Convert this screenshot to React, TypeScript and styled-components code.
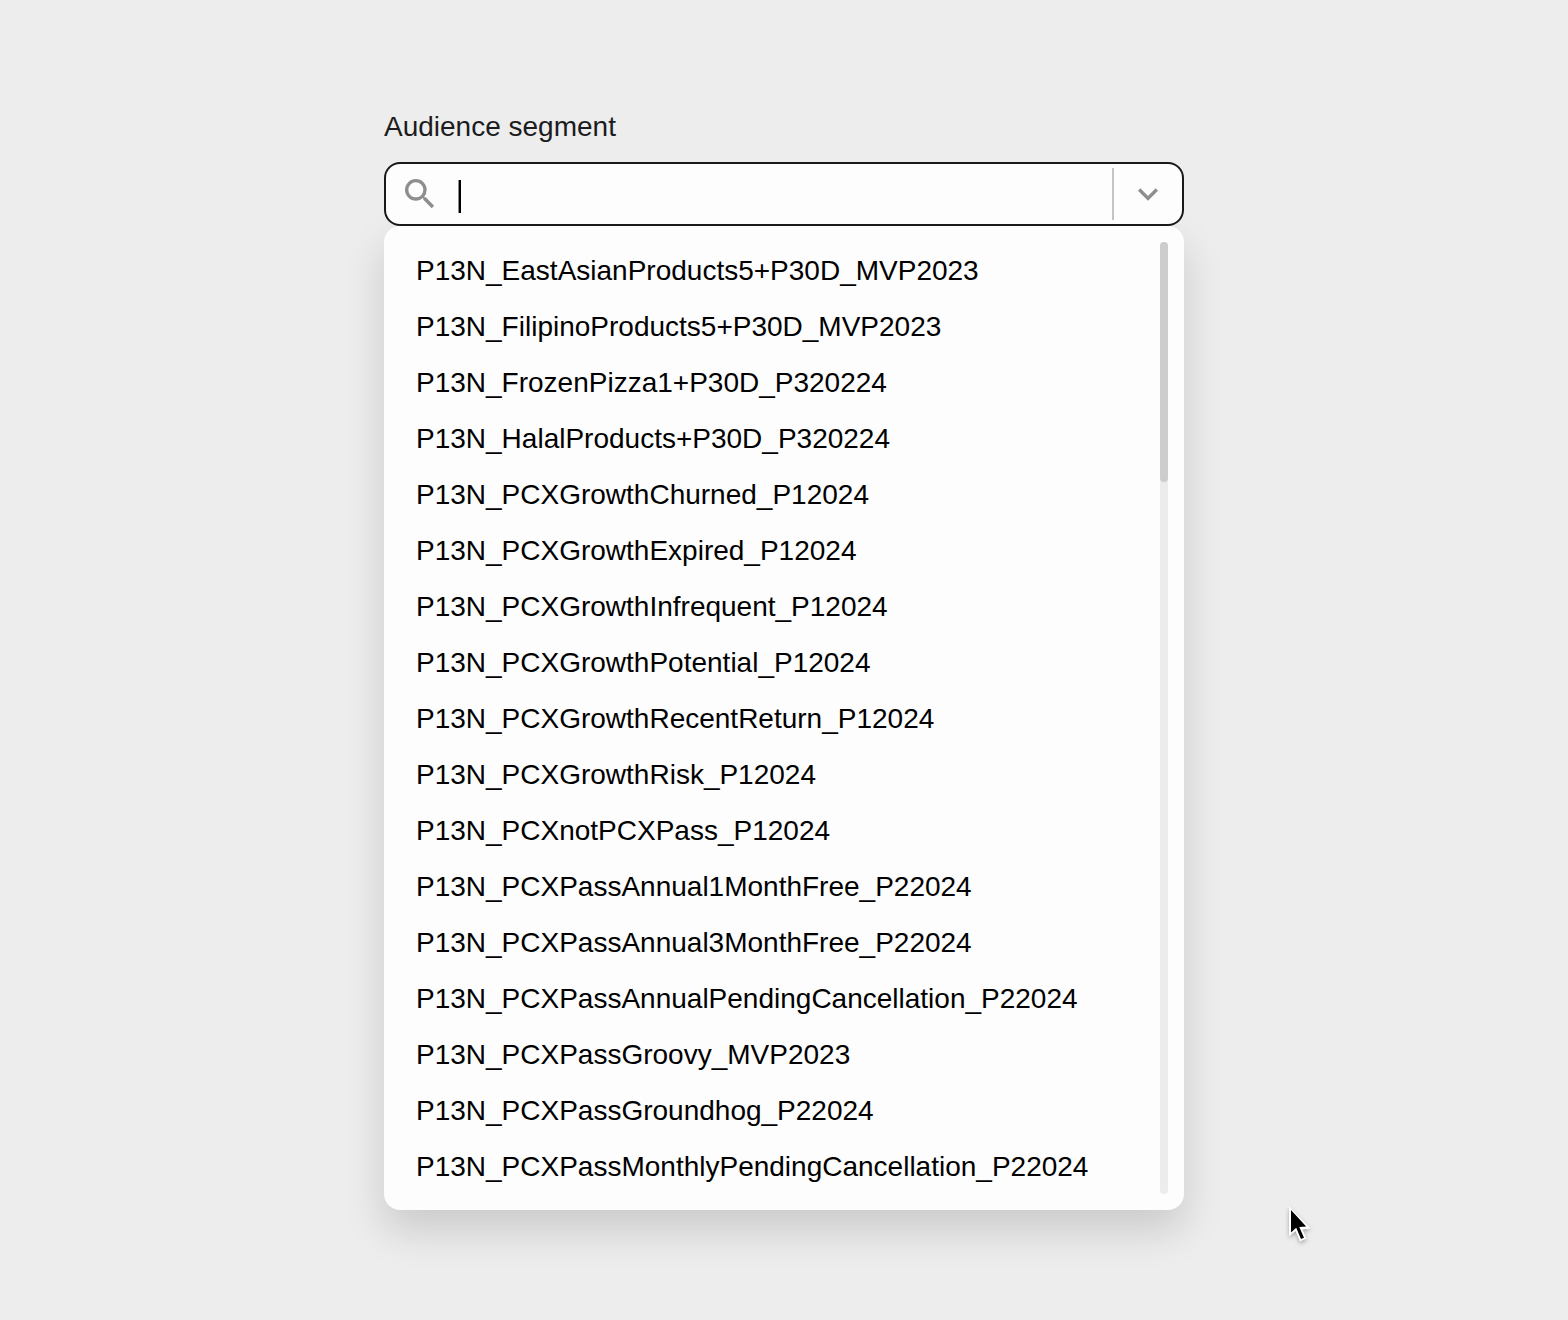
import React, { useState } from "react";
import styled, { createGlobalStyle } from "styled-components";

const GlobalStyle = createGlobalStyle`
  *, *::before, *::after { box-sizing: border-box; }
  body {
    margin: 0;
    background: #ededed;
    font-family: "Liberation Sans", Arial, Helvetica, sans-serif;
    font-size: 28px;
    line-height: 32px;
  }
`;

const Page = styled.main`
  display: flex;
  justify-content: center;
  padding: 111px 32px;
`;

const Combobox = styled.div`
  position: relative;
  display: flex;
  flex-direction: column;
  width: 100%;
  max-width: 800px;
`;

const Label = styled.label`
  margin-bottom: 19px;
  color: #1c1c1e;
`;

const Field = styled.div`
  position: relative;
  z-index: 1;
  display: flex;
  align-items: center;
  height: 64px;
  padding-left: 14px;
  border: 2px solid #19191b;
  border-radius: 16px;
  background: #fdfdfd;
`;

const Icon = styled.svg`
  flex: none;
  width: 40px;
  height: 40px;
  fill: #8e8e8e;
`;

const Entry = styled.div`
  position: relative;
  display: flex;
  flex: 1;
  align-items: center;
  min-width: 0;
  margin-left: 16px;
`;

const Caret = styled.span`
  position: absolute;
  left: 2px;
  top: 2px;
  width: 3px;
  height: 33px;
  border-left: 1px solid #8a8a8a;
  background: #000000;
`;

const TextBox = styled.input`
  width: 100%;
  height: 32px;
  padding: 0 4px;
  border: 0;
  outline: 0;
  background: transparent;
  color: #000000;
  font: inherit;
  caret-color: transparent;
`;

const Toggle = styled.button`
  display: flex;
  align-items: center;
  justify-content: center;
  width: 70px;
  height: 52px;
  padding: 0;
  border: 0;
  border-left: 2px solid #c4c4c4;
  background: transparent;
  cursor: pointer;
`;

const Menu = styled.div`
  display: flex;
  padding: 16px;
  border-radius: 16px;
  background: #fdfdfd;
  box-shadow: 0 20px 40px rgba(0, 0, 0, 0.15);
`;

const Options = styled.ul`
  flex: 1;
  min-width: 0;
  margin: 0;
  padding: 0;
  list-style: none;
`;

const Option = styled.li`
  padding: 13px 16px 11px;
  overflow: hidden;
  color: #000000;
  text-overflow: ellipsis;
  white-space: nowrap;
  cursor: pointer;
`;

const Track = styled.div`
  flex: none;
  width: 8px;
  border-radius: 4px;
  background: #ececec;
`;

const Thumb = styled.div`
  height: 240px;
  border-radius: 4px;
  background: #cdcdcd;
`;

const Pointer = styled.svg`
  position: absolute;
  left: 902px;
  top: 1093px;
  width: 30px;
  height: 42px;
  filter: drop-shadow(0 2px 2px rgba(0, 0, 0, 0.3));
  pointer-events: none;
`;

const segments = [
  "P13N_EastAsianProducts5+P30D_MVP2023",
  "P13N_FilipinoProducts5+P30D_MVP2023",
  "P13N_FrozenPizza1+P30D_P320224",
  "P13N_HalalProducts+P30D_P320224",
  "P13N_PCXGrowthChurned_P12024",
  "P13N_PCXGrowthExpired_P12024",
  "P13N_PCXGrowthInfrequent_P12024",
  "P13N_PCXGrowthPotential_P12024",
  "P13N_PCXGrowthRecentReturn_P12024",
  "P13N_PCXGrowthRisk_P12024",
  "P13N_PCXnotPCXPass_P12024",
  "P13N_PCXPassAnnual1MonthFree_P22024",
  "P13N_PCXPassAnnual3MonthFree_P22024",
  "P13N_PCXPassAnnualPendingCancellation_P22024",
  "P13N_PCXPassGroovy_MVP2023",
  "P13N_PCXPassGroundhog_P22024",
  "P13N_PCXPassMonthlyPendingCancellation_P22024",
];

export default function App() {
  const [value, setValue] = useState("");
  const [open, setOpen] = useState(true);

  return (
    <>
      <GlobalStyle />
      <Page>
        <Combobox>
          <Label htmlFor="segment">Audience segment</Label>
          <Field>
            <Icon viewBox="0 0 24 24" aria-hidden="true">
              <path d="M15.5 14h-.79l-.28-.27A6.47 6.47 0 0 0 16 9.5 6.5 6.5 0 1 0 9.5 16c1.61 0 3.09-.59 4.23-1.57l.27.28v.79l5 4.99L20.49 19l-4.99-5zm-6 0a4.5 4.5 0 1 1 0-9 4.5 4.5 0 0 1 0 9z" />
            </Icon>
            <Entry>
              <TextBox
                id="segment"
                type="text"
                role="combobox"
                aria-expanded={open}
                aria-controls="segment-options"
                autoComplete="off"
                value={value}
                onChange={(event) => setValue(event.target.value)}
              />
              {value === "" && <Caret />}
            </Entry>
            <Toggle type="button" aria-label="Toggle segments" onClick={() => setOpen(!open)}>
              <Icon viewBox="0 0 24 24" aria-hidden="true">
                <path d="M16.59 8.59 12 13.17 7.41 8.59 6 10l6 6 6-6z" />
              </Icon>
            </Toggle>
          </Field>
          {open && (
            <Menu>
              <Options id="segment-options" role="listbox" aria-label="Audience segment">
                {segments.map((segment) => (
                  <Option
                    key={segment}
                    role="option"
                    aria-selected={segment === value}
                    onClick={() => setValue(segment)}
                  >
                    {segment}
                  </Option>
                ))}
              </Options>
              <Track>
                <Thumb />
              </Track>
            </Menu>
          )}
          <Pointer viewBox="0 0 30 42" aria-hidden="true">
            <path d="M3 2V32.5L9.5 27L14 37.500L20.500 34.500L16.500 25.500L24.500 24.500Z" fill="#ffffff" />
            <path d="M5 6V28.500L10.200 23.800L15 35L18 33.700L13.300 23L20.200 22.500Z" fill="#000000" />
          </Pointer>
        </Combobox>
      </Page>
    </>
  );
}
